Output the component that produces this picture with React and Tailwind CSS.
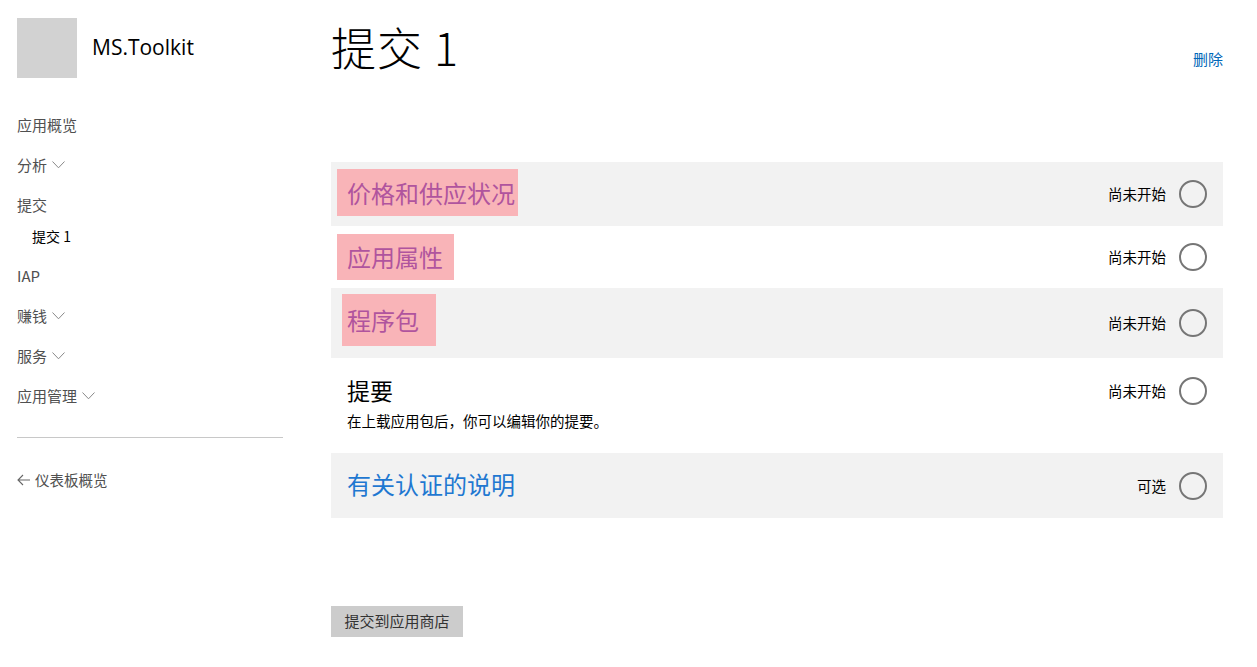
import React from 'react';

const cjk = { fontFamily: '"Noto Sans CJK SC", "Noto Sans", sans-serif' };

function Chevron() {
  return (
    <svg className="inline-block ml-[5px] w-[13px] h-[8px]" viewBox="0 0 13 8" fill="none" stroke="#888" strokeWidth="1">
      <path d="M0.5 0.5 L6.5 6.8 L12.5 0.5" />
    </svg>
  );
}

function Circle() {
  return <span className="w-[28px] h-[28px] rounded-full border-2 border-[#767676] shrink-0" />;
}

function Status({ label }) {
  return (
    <div className="flex items-center gap-[13px]">
      <span className="text-[14.5px] text-black">{label}</span>
      <Circle />
    </div>
  );
}

const navItems = [
  { label: '应用概览' },
  { label: '分析', chevron: true },
  { label: '提交' },
];

export default function App() {
  return (
    <div className="w-[1257px] h-[667px] bg-white flex overflow-hidden" style={cjk}>
      {/* Sidebar */}
      <aside className="w-[331px] shrink-0 pl-[17px] pt-[18px]">
        <div className="flex items-center gap-[15px]">
          <div className="w-[60px] h-[60px] bg-[#d2d2d2]" />
          <span className="text-[21px] text-black" style={{ fontFamily: '"Open Sans", "Noto Sans", sans-serif' }}>MS.Toolkit</span>
        </div>

        <nav className="mt-[27px] text-[15px] text-[#505050]">
          {navItems.map(item => (
            <div key={item.label} className="h-[40px] flex items-center">
              {item.label}{item.chevron && <Chevron />}
            </div>
          ))}
          <div className="h-[24px] flex items-center pl-[15px] text-[14px] text-black -mt-[1px]">提交 1</div>
          <div className="h-[40px] flex items-center mt-[8px]">IAP</div>
          <div className="h-[40px] flex items-center">赚钱<Chevron /></div>
          <div className="h-[40px] flex items-center">服务<Chevron /></div>
          <div className="h-[40px] flex items-center">应用管理<Chevron /></div>
        </nav>

        <div className="w-[266px] h-px bg-[#c8c8c8] mt-[21px]" />

        <div className="mt-[31px] flex items-center gap-[4px] text-[14.5px] text-[#505050]">
          <svg className="w-[14px] h-[12px]" viewBox="0 0 14 12" fill="none" stroke="#666" strokeWidth="1.1">
            <path d="M13 6 H1 M6 1 L1 6 L6 11" />
          </svg>
          仪表板概览
        </div>
      </aside>

      {/* Main */}
      <main className="w-[892px] shrink-0 flex flex-col">
        <div className="flex items-start justify-between h-[162px]">
          <h1 className="text-[45px] font-light text-black leading-none mt-[24px] tracking-[1px]">提交 1</h1>
          <a href="#" className="text-[15px] text-[#0067b8] mt-[48px]">删除</a>
        </div>

        <div className="h-[64px] bg-[#f2f2f2] flex items-center justify-between pl-[6px] pr-[16px]">
          <span className="h-[47px] w-[181px] bg-[#f9b4b8] pl-[10px] flex items-center text-[24px] text-[#b0549e] -mt-[3px]">价格和供应状况</span>
          <Status label="尚未开始" />
        </div>

        <div className="h-[62px] bg-white flex items-center justify-between pl-[6px] pr-[16px]">
          <span className="h-[46px] w-[117px] bg-[#f9b4b8] pl-[10px] flex items-center text-[24px] text-[#b0549e]">应用属性</span>
          <Status label="尚未开始" />
        </div>

        <div className="h-[70px] bg-[#f2f2f2] flex items-center justify-between pl-[11px] pr-[16px]">
          <span className="h-[52px] w-[94px] bg-[#f9b4b8] pl-[5px] flex items-center text-[24px] text-[#b0549e] -mt-[6px]">程序包</span>
          <Status label="尚未开始" />
        </div>

        <div className="h-[95px] bg-white flex justify-between pl-[16px] pr-[16px] pt-[18px]">
          <div>
            <div className="text-[23px] text-black leading-[28px]">提要</div>
            <div className="text-[14.5px] text-black mt-[6px]">在上载应用包后，你可以编辑你的提要。</div>
          </div>
          <div className="pt-[1px]"><Status label="尚未开始" /></div>
        </div>

        <div className="h-[65px] bg-[#f2f2f2] flex items-center justify-between pl-[16px] pr-[16px]">
          <span className="text-[24px] text-[#1f78d1] -mt-[4px]">有关认证的说明</span>
          <Status label="可选" />
        </div>

        <div className="mt-[88px]">
          <button className="h-[31px] w-[132px] bg-[#cccccc] text-[15px] text-[#333]">提交到应用商店</button>
        </div>
      </main>
    </div>
  );
}
